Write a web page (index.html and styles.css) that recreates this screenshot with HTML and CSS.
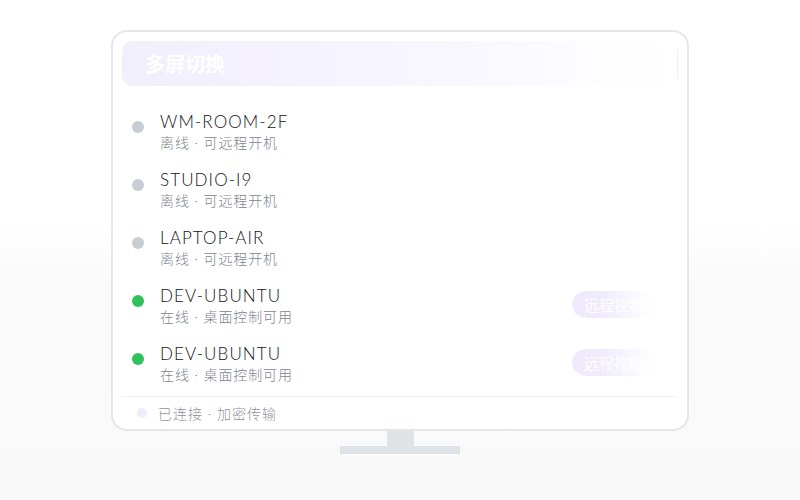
FILE: index.html
```html
<!DOCTYPE html>
<html lang="zh-CN">
<head>
  <meta charset="UTF-8">
  <meta name="viewport" content="width=device-width, initial-scale=1.0">
  <title>多屏切换</title>
  <link rel="stylesheet" href="styles.css">
</head>
<body>

  <div class="monitor">
    <div class="screen">
      <!-- Title bar -->
      <div class="header-row">
        <div class="header">
          <h1>多屏切换</h1>
        </div>
        <span class="header-rule"></span>
      </div>

      <!-- Device list -->
      <ul class="device-list">
        <li class="device">
          <span class="dot"></span>
          <div class="info">
            <div class="name">WM-ROOM-2F</div>
            <div class="status">离线 · 可远程开机</div>
          </div>
        </li>
        <li class="device">
          <span class="dot"></span>
          <div class="info">
            <div class="name">STUDIO-I9</div>
            <div class="status">离线 · 可远程开机</div>
          </div>
        </li>
        <li class="device">
          <span class="dot"></span>
          <div class="info">
            <div class="name">LAPTOP-AIR</div>
            <div class="status">离线 · 可远程开机</div>
          </div>
        </li>
        <li class="device">
          <span class="dot online"></span>
          <div class="info">
            <div class="name">DEV-UBUNTU</div>
            <div class="status">在线 · 桌面控制可用</div>
          </div>
          <button class="remote-btn">远程控制</button>
        </li>
        <li class="device">
          <span class="dot online"></span>
          <div class="info">
            <div class="name">DEV-UBUNTU</div>
            <div class="status">在线 · 桌面控制可用</div>
          </div>
          <button class="remote-btn">远程控制</button>
        </li>
      </ul>

      <!-- Connection footer -->
      <div class="footer">
        <span class="footer-dot"></span>
        <span>已连接 · 加密传输</span>
      </div>
    </div>

    <div class="neck"></div>
    <div class="base"></div>
  </div>

</body>
</html>
```

FILE: styles.css
```css
/* Reset and base styling */
* {
  margin: 0;
  padding: 0;
  box-sizing: border-box;
}

html,
body {
  height: 100%;
}

body {
  font-family: Lato, 'Noto Sans CJK SC', sans-serif;
  background: linear-gradient(180deg, #ffffff 0%, #ffffff 44%, #fafafb 56%, #f9f9fa 100%);
  overflow: hidden;
}

/* Monitor */
.monitor {
  display: flex;
  flex-direction: column;
  align-items: center;
  padding-top: 30px;
}

.screen {
  width: 578px;
  height: 401px;
  background-color: #fff;
  border: 2px solid #e4e6ea;
  border-radius: 16px;
  padding: 9px 9px 0 9px;
  display: flex;
  flex-direction: column;
}

.neck {
  width: 27px;
  height: 15px;
  background-color: #dfe3e8;
}

.base {
  width: 120px;
  height: 8px;
  background-color: #dfe3e8;
}

/* Title bar */
.header-row {
  display: flex;
  align-items: center;
  gap: 1px;
}

.header {
  flex: 1;
  height: 45px;
  border-radius: 10px;
  background: linear-gradient(90deg, #f2effd 0%, #f6f4fe 45%, #fdfcff 85%, #ffffff 100%);
  display: flex;
  align-items: center;
  padding-left: 23px;
}

.header h1 {
  font-family: 'Noto Sans CJK SC', sans-serif;
  font-size: 20px;
  font-weight: 700;
  color: #fff;
}

.header-rule {
  width: 1px;
  height: 30px;
  background-color: #eceef1;
}

/* Device list */
.device-list {
  list-style: none;
  padding-top: 17px;
  margin-bottom: 3px;
}

.device {
  height: 58px;
  display: flex;
  align-items: flex-start;
  padding: 8px 0 0 10px;
}

.dot {
  width: 12px;
  height: 12px;
  border-radius: 50%;
  background-color: #c8ccd3;
  margin: 10px 16px 0 0;
  flex-shrink: 0;
}

.dot.online {
  background-color: #2fc25b;
}

.name {
  font-size: 17px;
  font-weight: 300;
  line-height: 22px;
  color: #111418;
  letter-spacing: 1.1px;
}

.status {
  font-size: 14px;
  font-weight: 300;
  line-height: 20px;
  color: #80868f;
  letter-spacing: 0.9px;
}

.remote-btn {
  margin: 6px 6px 0 auto;
  width: 100px;
  height: 27px;
  border: none;
  border-radius: 14px;
  background-color: #efebfd;
  color: #fff;
  font-family: 'Liberation Serif', 'Noto Sans CJK SC', serif;
  font-size: 15px;
  text-align: left;
  padding-left: 12px;
  -webkit-mask-image: linear-gradient(90deg, #000 30%, transparent 80%);
  mask-image: linear-gradient(90deg, #000 30%, transparent 80%);
}

/* Footer */
.footer {
  border-top: 1px solid #eef0f3;
  height: 33px;
  display: flex;
  align-items: center;
  padding-left: 15px;
  font-size: 14px;
  font-weight: 300;
  letter-spacing: 1px;
  color: #8f949c;
  margin-right: 2px;
}

.footer-dot {
  width: 10px;
  height: 10px;
  border-radius: 50%;
  background-color: #eeebfd;
  margin-right: 11px;
}
```
